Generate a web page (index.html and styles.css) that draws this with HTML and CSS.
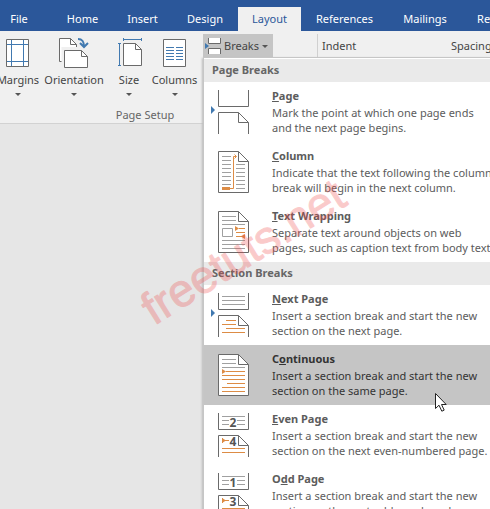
FILE: index.html
```html
<!DOCTYPE html>
<html lang="en">
<head>
<meta charset="utf-8">
<title>Layout ribbon</title>
<link rel="stylesheet" href="styles.css">
</head>
<body>
<nav class="tabs">
  <a class="tab file" href="#">File</a>
  <a class="tab" href="#">Home</a>
  <a class="tab" href="#">Insert</a>
  <a class="tab" href="#">Design</a>
  <a class="tab active" href="#">Layout</a>
  <a class="tab" href="#">References</a>
  <a class="tab" href="#">Mailings</a>
  <a class="tab" href="#">Review</a>
</nav>

<section class="ribbon">
  <div class="group">
    <div class="tools">
      <button class="tool">
        <svg width="36" height="34" fill="none"><path fill="#fff" stroke="#6a6a6a" d="M6.500 3.500h22v27h-22z"/><path stroke="#4179b0" d="M11.500 4v26M23.500 4v26M7 8.500h21M7 25.500h21"/></svg>
        <span>Margins</span><i class="caret"></i>
      </button>
      <button class="tool">
        <svg width="36" height="34" fill="none"><path fill="#fff" stroke="#6a6a6a" d="M3.500 2.500h11l6 6v17h-17z"/><path stroke="#6a6a6a" d="M14.500 2.500v6h6"/><path stroke="#f0f0f0" stroke-width="3" d="M7 32v-19.500h19"/><path fill="#fff" stroke="#6a6a6a" d="M8.500 14.500h17l6 6v11h-23z"/><path stroke="#6a6a6a" d="M25.500 14.500v6h6"/><path stroke="#4179b0" stroke-width="2" d="M22 3c5 0 6 3 6 8M24 7l4 4 4-4"/></svg>
        <span>Orientation</span><i class="caret"></i>
      </button>
      <button class="tool">
        <svg width="36" height="34" fill="none"><path fill="#fff" stroke="#6a6a6a" d="M12.500 7.500h12l6 6v16h-18z"/><path stroke="#6a6a6a" d="M24.500 7.500v6h6"/><path stroke="#4179b0" d="M12.500 3.500h18M12.500 2v3M30.500 2v3M8.500 7.500v22M7 7.500h3M7 29.500h3"/></svg>
        <span>Size</span><i class="caret"></i>
      </button>
      <button class="tool">
        <svg width="36" height="34" fill="none"><path fill="#fff" stroke="#6a6a6a" d="M6.500 3.500h22v27h-22z"/><path stroke="#4179b0" d="M9 11.500h8M19 11.500h7M9 14.500h8M19 14.500h7M9 17.500h8M19 17.500h7M9 20.500h8M19 20.500h7M9 23.500h8M19 23.500h7"/></svg>
        <span>Columns</span><i class="caret"></i>
      </button>
      <button class="breaks">
        <svg width="18" height="18" fill="none"><path fill="#fff" stroke="#6a6a6a" d="M5.500 1v5.500h12V1M5.500 17v-5.500h12V17"/><path fill="#4179b0" d="M2 6l4 3-4 3z"/></svg>
        <span>Breaks</span><i class="caret"></i>
      </button>
    </div>
    <div class="caption">Page Setup</div>
  </div>
  <div class="paragraph"><span>Indent</span><span>Spacing</span></div>
</section>

<main class="workspace"></main>

<div class="menu" role="menu">
  <h2>Page Breaks</h2>
  <button class="item" role="menuitem">
    <svg width="42" height="44" fill="none"><path stroke="#6a6a6a" d="M8.500 0v16.500h30V0M8.500 44V22.500h20l10 10V44M28.500 22.500v10h10"/><path fill="#4179b0" d="M1 16l4 4-4 4z"/></svg>
    <span><b><u>P</u>age</b>Mark the point at which one page ends<br>and the next page begins.</span>
  </button>
  <button class="item" role="menuitem">
    <svg width="42" height="44" fill="none"><path fill="#fff" stroke="#6a6a6a" d="M8.500 1.500h20l10 10v31h-30zM38.500 11.500h-10v-10"/><path stroke="#a0a0a0" d="M12 6.500h9M12 10.500h9M12 14.500h9M12 18.500h9M12 22.500h9M12 26.500h9M12 30.500h9M12 34.500h9M26 14.500h9M26 18.500h9M26 22.500h9M26 26.500h9M26 30.500h9M26 34.500h9M26 38.500h9"/><path stroke="#dd8c45" d="M20 38.500h3.500v-32H26M24.500 4.500l2 2-2 2"/><path fill="#dd8c45" d="M12 37h8v3h-8z"/></svg>
    <span><b><u>C</u>olumn</b>Indicate that the text following the column<br>break will begin in the next column.</span>
  </button>
  <button class="item" role="menuitem">
    <svg width="42" height="44" fill="none"><path fill="#fff" stroke="#6a6a6a" d="M8.500 1.500h20l10 10v31h-30zM38.500 11.500h-10v-10"/><path stroke="#a0a0a0" d="M12 6.500h14M12 10.500h14M12 14.500h23M12.500 18.500h10v8h-10zM12 30.500h23M12 34.500h23M12 38.500h23"/><path stroke="#dd8c45" d="M29 18.500h6M26 22.500h9M26 26.500h6"/><path fill="#dd8c45" d="M25 16l4 2.500-4 2.500zM35 24l-4 2.500 4 2.500z"/></svg>
    <span><b><u>T</u>ext Wrapping</b>Separate text around objects on web<br>pages, such as caption text from body text.</span>
  </button>
  <h2>Section Breaks</h2>
  <button class="item" role="menuitem">
    <svg width="42" height="44" fill="none"><path stroke="#6a6a6a" d="M8.500 0v16.500h30V0M8.500 44V22.500h20l10 10V44M28.500 22.500v10h10"/><path stroke="#a0a0a0" d="M12 3.500h23M12 7.500h23M12 11.500h23"/><path stroke="#dd8c45" d="M16 27.500h10M12 31.500h14M16 35.500h19M12 39.500h23"/><path fill="#4179b0" d="M1 16l4 4-4 4z"/></svg>
    <span><b><u>N</u>ext Page</b>Insert a section break and start the new<br>section on the next page.</span>
  </button>
  <button class="item selected" role="menuitem">
    <svg width="42" height="44" fill="none"><path fill="#fff" stroke="#6a6a6a" d="M8.500 1.500h20l10 10v31h-30zM38.500 11.500h-10v-10"/><path stroke="#a0a0a0" d="M12 6.500h14M12 10.500h14M12 14.500h23"/><path stroke="#dd8c45" d="M16 18.500h19M12 22.500h23M12 26.500h23M17 30.500h18M12 34.500h23M12 38.500h23"/><path fill="#dd8c45" d="M12 16l4 2.500-4 2.500z"/></svg>
    <span><b>C<u>o</u>ntinuous</b>Insert a section break and start the new<br>section on the same page.</span>
  </button>
  <button class="item" role="menuitem">
    <svg width="42" height="44" fill="none"><path stroke="#6a6a6a" d="M8.500 0v16.500h30V0M8.500 44V22.500h20l10 10V44M28.500 22.500v10h10"/><path stroke="#a0a0a0" d="M12 3.500h23M12 7.500h7M27 7.500h8M12 11.500h7M27 11.500h8"/><path stroke="#dd8c45" d="M12.500 25v5M15 27.500h4M12 35.500h23M12 39.500h23"/><path fill="#dd8c45" d="M12 25l4 2.500-4 2.500z"/><text class="digit" x="23" y="14">2</text><text class="digit" x="23" y="33">4</text></svg>
    <span><b><u>E</u>ven Page</b>Insert a section break and start the new<br>section on the next even-numbered page.</span>
  </button>
  <button class="item" role="menuitem">
    <svg width="42" height="44" fill="none"><path stroke="#6a6a6a" d="M8.500 0v16.500h30V0M8.500 44V22.500h20l10 10V44M28.500 22.500v10h10"/><path stroke="#a0a0a0" d="M12 3.500h23M12 7.500h7M27 7.500h8M12 11.500h7M27 11.500h8"/><path stroke="#dd8c45" d="M12.500 25v5M15 27.500h4M12 35.500h23M12 39.500h23"/><path fill="#dd8c45" d="M12 25l4 2.500-4 2.500z"/><text class="digit" x="23" y="14">1</text><text class="digit" x="23" y="33">3</text></svg>
    <span><b>O<u>d</u>d Page</b>Insert a section break and start the new<br>section on the next odd-numbered page.</span>
  </button>
</div>

<svg class="watermark" width="240" height="180"><text transform="translate(34 166) rotate(-32)">freetuts.net</text></svg>
<svg class="pointer" width="14" height="21"><path fill="#fff" stroke="#222" d="M1.500 1.500v15l3.500-3.300 2.800 6 2.400-1.100-2.700-5.600h4.700z"/></svg>
</body>
</html>
```
FILE: styles.css
```css
* { box-sizing: border-box; }
body {
  margin: 0;
  height: 100vh;
  position: relative;
  overflow: hidden;
  display: flex;
  flex-direction: column;
  background: #e6e6e6;
  color: #444;
  font: 11px/16px "Noto Sans", "Open Sans", sans-serif;
}
button {
  border: 0;
  padding: 0;
  background: none;
  color: inherit;
  font: inherit;
}
.tabs {
  display: grid;
  grid-template-columns: 52px 61px 59px 66px 63px 87px 74px 66px;
  height: 31px;
  padding-top: 7px;
  background: #2b579a;
  overflow: hidden;
}
.tab {
  color: #fff;
  text-align: center;
  text-decoration: none;
  line-height: 24px;
}
.file { padding-right: 14px; }
.tab.active { background: #f0f0f0; color: #2b579a; }

.ribbon {
  display: flex;
  height: 93px;
  flex: none;
  padding-top: 3px;
  background: #f0f0f0;
  border-bottom: 1px solid #d2d2d2;
  overflow: hidden;
}
.group {
  flex: none;
  width: 318px;
  display: flex;
  flex-direction: column;
  justify-content: space-between;
  border-right: 1px solid #d0d0d0;
}
.tools {
  display: grid;
  grid-template-columns: 36px 76px 34px 57px 70px;
  align-items: start;
}
.tool {
  display: flex;
  flex-direction: column;
  align-items: center;
  padding-top: 2px;
}
.tool span { line-height: 20px; }
.tool .caret { margin-top: 3px; }
.caret {
  width: 0;
  border: 3px solid transparent;
  border-top-color: #555;
  border-bottom: 0;
}
.breaks {
  display: flex;
  align-items: center;
  gap: 3px;
  height: 24px;
  background: #c5c5c5;
}
.caption {
  padding-right: 27px;
  text-align: center;
  color: #666;
}
.paragraph {
  flex: none;
  display: grid;
  grid-template-columns: 129px 60px;
  padding-left: 4px;
  line-height: 24px;
}
.workspace { flex: 1; }

.menu {
  position: absolute;
  top: 57px;
  left: 203px;
  right: 0;
  background: #fff;
  border: 1px solid #c6c6c6;
  border-right: 0;
  padding-top: 1px;
  box-shadow: -1px 1px 2px #bbb;
  white-space: nowrap;
  color: #5c5c5c;
  overflow: hidden;
}
.menu h2 {
  margin: 0;
  height: 23px;
  padding-left: 8px;
  background: #eaeaea;
  color: #666;
  font-size: 11px;
  line-height: 21px;
}
.item {
  display: flex;
  gap: 20px;
  width: 100%;
  height: 60px;
  padding: 6px 0 0 6px;
  text-align: left;
  line-height: 15px;
}
.item svg { flex: none; margin-top: 2px; }
.item b {
  display: block;
  margin-bottom: 2px;
}
.item.selected { background: #c5c5c5; color: #333; }
.digit {
  fill: #555;
  font-size: 12px;
  font-weight: bold;
  text-anchor: middle;
}
.watermark {
  position: absolute;
  left: 120px;
  top: 160px;
  pointer-events: none;
}
.watermark text {
  font: 46px "Liberation Sans", sans-serif;
  fill: #f04646;
  stroke: #f04646;
  stroke-width: 1px;
  stroke-linejoin: round;
  opacity: .28;
}
.pointer {
  position: absolute;
  left: 434px;
  top: 392px;
  pointer-events: none;
}
```
